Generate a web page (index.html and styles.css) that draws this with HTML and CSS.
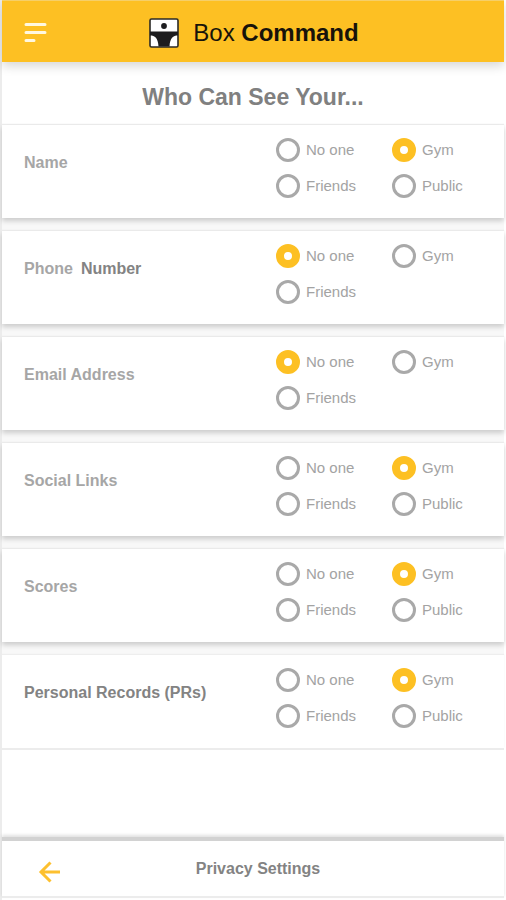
FILE: index.html
```html
<!DOCTYPE html>
<html lang="en">
<head>
<meta charset="utf-8">
<meta name="viewport" content="width=device-width, initial-scale=1">
<title>Privacy Settings</title>
<link rel="stylesheet" href="styles.css">
</head>
<body>
<header class="topbar">
  <button class="icon-button" type="button" aria-label="Menu">
    <svg width="24" height="22" viewBox="0 0 24 22" fill="none" stroke="#fff8e0" stroke-width="3" stroke-linecap="round"><path d="M2 2.500H21M2 10.500H21M2 18.500H10"/></svg>
  </button>
  <div class="brand">
    <svg width="30" height="30" viewBox="0 0 30 30" aria-hidden="true">
      <rect x="1" y="1" width="28" height="28" rx="1.5" fill="#fff" stroke="#2b2a26" stroke-width="1.6"/>
      <circle cx="15" cy="8" r="2.9" fill="#1d1d1f"/>
      <path d="M1 13.500H29V17.500C24 17.500 21 20 20.500 28.500H9.500C9 20 6 17.500 1 17.500Z" fill="#1d1d1f"/>
    </svg>
    <span>Box <b>Command</b></span>
  </div>
</header>
<main class="content">
  <h1 class="title">Who Can See Your...</h1>
  <div class="settings">
    <section class="setting" role="radiogroup" aria-labelledby="name">
      <h2 class="setting-name" id="name">Name</h2>
      <div class="options">
        <label class="option"><input type="radio" name="name">No one</label>
        <label class="option"><input type="radio" name="name" checked>Gym</label>
        <label class="option"><input type="radio" name="name">Friends</label>
        <label class="option"><input type="radio" name="name">Public</label>
      </div>
    </section>
    <section class="setting" role="radiogroup" aria-labelledby="phone">
      <h2 class="setting-name split" id="phone"><span>Phone</span> <span class="strong">Number</span></h2>
      <div class="options">
        <label class="option"><input type="radio" name="phone" checked>No one</label>
        <label class="option"><input type="radio" name="phone">Gym</label>
        <label class="option"><input type="radio" name="phone">Friends</label>
      </div>
    </section>
    <section class="setting" role="radiogroup" aria-labelledby="email">
      <h2 class="setting-name" id="email">Email Address</h2>
      <div class="options">
        <label class="option"><input type="radio" name="email" checked>No one</label>
        <label class="option"><input type="radio" name="email">Gym</label>
        <label class="option"><input type="radio" name="email">Friends</label>
      </div>
    </section>
    <section class="setting" role="radiogroup" aria-labelledby="social">
      <h2 class="setting-name" id="social">Social Links</h2>
      <div class="options">
        <label class="option"><input type="radio" name="social">No one</label>
        <label class="option"><input type="radio" name="social" checked>Gym</label>
        <label class="option"><input type="radio" name="social">Friends</label>
        <label class="option"><input type="radio" name="social">Public</label>
      </div>
    </section>
    <section class="setting" role="radiogroup" aria-labelledby="scores">
      <h2 class="setting-name" id="scores">Scores</h2>
      <div class="options">
        <label class="option"><input type="radio" name="scores">No one</label>
        <label class="option"><input type="radio" name="scores" checked>Gym</label>
        <label class="option"><input type="radio" name="scores">Friends</label>
        <label class="option"><input type="radio" name="scores">Public</label>
      </div>
    </section>
    <section class="setting" role="radiogroup" aria-labelledby="records">
      <h2 class="setting-name strong" id="records">Personal Records (PRs)</h2>
      <div class="options">
        <label class="option"><input type="radio" name="records">No one</label>
        <label class="option"><input type="radio" name="records" checked>Gym</label>
        <label class="option"><input type="radio" name="records">Friends</label>
        <label class="option"><input type="radio" name="records">Public</label>
      </div>
    </section>
  </div>
</main>
<footer class="bottombar">
  <button class="icon-button" type="button" aria-label="Back">
    <svg width="24" height="22" viewBox="0 0 24 22" fill="none" stroke="#fdc02f" stroke-width="3"><path d="M22 11H3M12.500 1.500L3 11L12.500 20.500"/></svg>
  </button>
  <span class="bottombar-title">Privacy Settings</span>
</footer>
</body>
</html>
```
FILE: styles.css
```css
* {
  box-sizing: border-box;
}

body {
  display: flex;
  flex-direction: column;
  min-height: 100vh;
  margin: 0;
  padding: 0 2px 2px;
  background: linear-gradient(to right, #ececec 2px, #fff 2px);
  font-family: "Liberation Sans", Arial, sans-serif;
}

.icon-button {
  display: flex;
  padding: 0;
  border: 0;
  background: none;
}

.topbar {
  display: grid;
  grid-template-columns: 1fr auto 1fr;
  align-items: center;
  height: 62px;
  padding: 2px 20px 0 22px;
  background: #fdc023;
  border-top: 1px solid #f6cf68;
  box-shadow: 0 4px 10px rgba(0, 0, 0, 0.16);
}

.brand {
  display: flex;
  align-items: center;
  gap: 14px;
  font-size: 24px;
  line-height: 28px;
  color: #17130a;
}

.content {
  display: flex;
  flex: 1;
  flex-direction: column;
  padding-bottom: 87px;
}

.title {
  margin: 0;
  padding: 22px 0 13px;
  font-size: 23px;
  line-height: 27px;
  text-align: center;
  color: #808080;
}

.settings {
  display: grid;
  flex: 1;
  grid-auto-rows: 1fr;
  gap: 13px;
  background: #f8f8f8;
  border-top: 1px solid #f3f3f3;
  border-bottom: 2px solid #ececec;
}

.setting {
  display: grid;
  grid-template-columns: 1fr 228px;
  align-items: start;
  padding: 13px 0 18px 22px;
  background: #fff;
  box-shadow: 0 3px 5px rgba(0, 0, 0, 0.18), 0 -1px 1px #eee;
}

.setting:last-child {
  box-shadow: 0 -1px 1px #eee;
}

.setting-name {
  margin: 0;
  padding-top: 13px;
  font-size: 16px;
  line-height: 24px;
  color: #a6a6a6;
}

.split {
  display: flex;
  gap: 8px;
}

.strong {
  color: #838383;
}

.options {
  display: grid;
  grid-template-columns: 116px 1fr;
  gap: 12px 0;
}

.option {
  display: flex;
  align-items: center;
  gap: 6px;
  font-size: 15px;
  line-height: 24px;
  color: #a3a3a3;
}

.option input {
  appearance: none;
  width: 24px;
  height: 24px;
  margin: 0;
  border: 3px solid #a9a9a9;
  border-radius: 50%;
  background: #fff;
}

.option input:checked {
  border: 8px solid #fdc023;
}

.bottombar {
  display: grid;
  grid-template-columns: 1fr auto 1fr;
  align-items: center;
  height: 61px;
  padding: 0 26px 0 36px;
  border-top: 4px solid #d2d2d2;
  border-bottom: 2px solid #ececec;
  box-shadow: 0 -2px 3px rgba(0, 0, 0, 0.12);
}

.bottombar .icon-button {
  padding-top: 6px;
}

.bottombar-title {
  font-size: 16px;
  font-weight: bold;
  line-height: 24px;
  color: #838383;
}
```
